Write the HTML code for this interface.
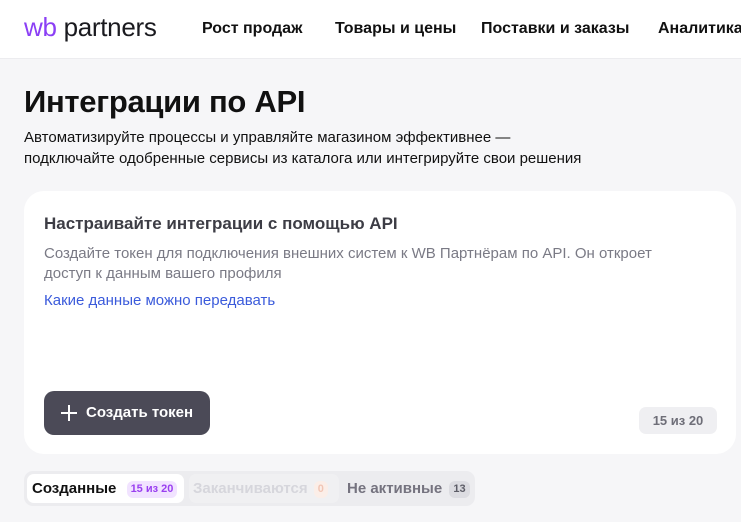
<!DOCTYPE html>
<html><head><meta charset="utf-8"><style>
*{margin:0;padding:0;box-sizing:border-box}
body{width:741px;height:522px;overflow:hidden;background:#f6f6f8;font-family:"Liberation Sans",sans-serif;color:#1a1a1f;position:relative}
.top{position:absolute;left:0;top:0;width:741px;height:59px;background:#fff;border-bottom:1px solid #ececef}
.logo{position:absolute;left:24px;top:12px;font-size:26px;letter-spacing:-0.3px;font-weight:normal}
.logo .wb{color:#8b3ff5}
.nav{position:absolute;top:20px;font-size:16px;font-weight:bold;color:#111;white-space:nowrap}
h1{position:absolute;left:24px;top:84px;font-size:31px;font-weight:bold;color:#111;letter-spacing:-0.3px}
.sub{position:absolute;left:24px;top:127px;font-size:15px;line-height:21px;color:#111}
.card{position:absolute;left:24px;top:191px;width:712px;height:263px;background:#fff;border-radius:20px}
.ct{position:absolute;left:20px;top:23px;font-size:17px;font-weight:bold;color:#3d3d45}
.cd{position:absolute;left:20px;top:53px;font-size:15px;line-height:20px;color:#7a7a85;width:662px}
.link{position:absolute;left:20px;top:101px;font-size:15px;color:#3b5bdb}
.btn{position:absolute;left:20px;top:200px;width:166px;height:44px;background:#4b4a57;border-radius:10px;color:#fff;font-size:15px;font-weight:bold;line-height:44px;padding-left:42px}
.btn:before{content:"";position:absolute;left:17px;top:21px;width:16px;height:2px;background:#fff}
.btn:after{content:"";position:absolute;left:24px;top:14px;width:2px;height:16px;background:#fff}
.cnt{position:absolute;left:615px;top:216px;width:78px;height:27px;background:#efeff2;border-radius:7px;font-size:13px;font-weight:bold;color:#6e6e78;text-align:center;line-height:27px}
.tabs{position:absolute;left:24px;top:471px;width:451px;height:35px;background:#ececef;border-radius:9px}
.tab{position:absolute;top:3px;height:29px;line-height:29px;font-size:15px;font-weight:bold;border-radius:7px}
.b{display:inline-block;font-size:11px;font-weight:bold;border-radius:6px;height:17px;line-height:17px;padding:0 4px;vertical-align:1px}
</style></head><body>
<div class="top">
<div class="logo"><span class="wb">wb</span> partners</div>
<div class="nav" style="left:202px">Рост продаж</div>
<div class="nav" style="left:335px">Товары и цены</div>
<div class="nav" style="left:481px">Поставки и заказы</div>
<div class="nav" style="left:658px">Аналитика</div>
</div>
<h1>Интеграции по API</h1>
<div class="sub">Автоматизируйте процессы и управляйте магазином эффективнее —<br>подключайте одобренные сервисы из каталога или интегрируйте свои решения</div>
<div class="card">
<div class="ct">Настраивайте интеграции с помощью API</div>
<div class="cd">Создайте токен для подключения внешних систем к WB Партнёрам по API. Он откроет<br>доступ к данным вашего профиля</div>
<div class="link">Какие данные можно передавать</div>
<div class="btn">Создать токен</div>
<div class="cnt">15 из 20</div>
</div>
<div class="tabs">
<div class="tab" style="left:3px;width:157px;background:#fff;padding-left:5px;color:#111">Созданные <span class="b" style="background:#f1e3ff;color:#9a3ff0;margin-left:6px">15 из 20</span></div>
<div class="tab" style="left:165px;width:150px;padding-left:4px;background:#f0f0f2;color:#d6d6dc">Заканчиваются <span class="b" style="background:#fbeee8;color:#f1c5b4;margin-left:2px">0</span></div>
<div class="tab" style="left:323px;width:128px;color:#75737f">Не активные <span class="b" style="background:#dcdce1;color:#5d5d67;margin-left:3px">13</span></div>
</div>
</body></html>
